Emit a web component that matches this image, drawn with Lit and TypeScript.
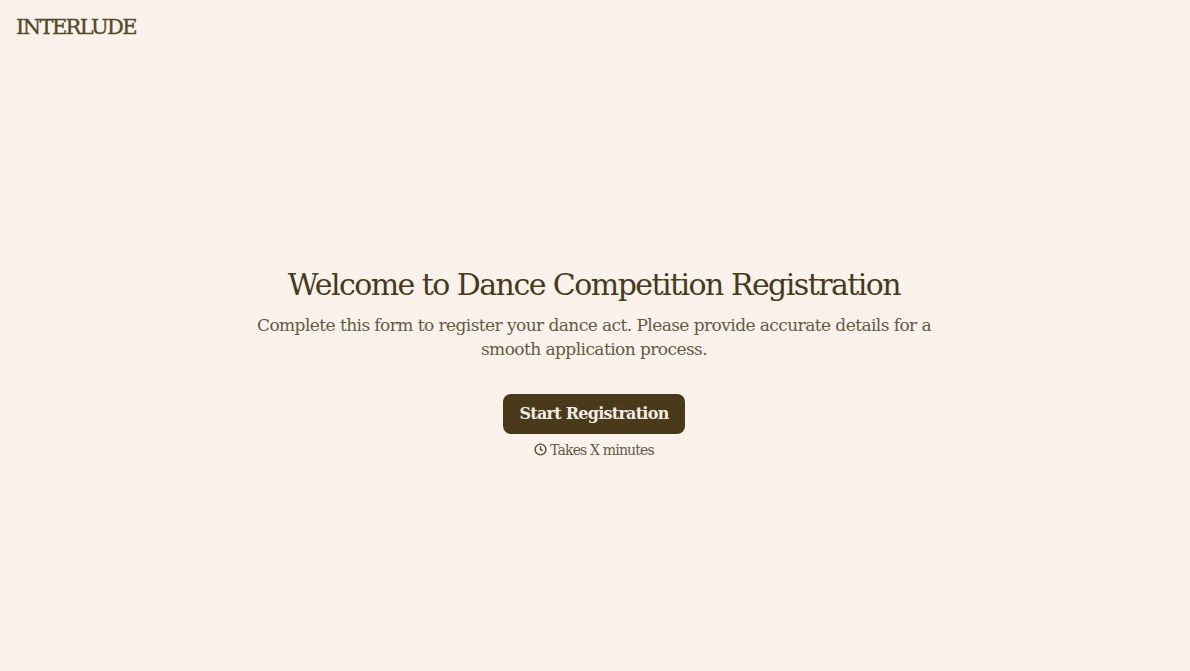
import { LitElement, html, css } from "lit";
import { customElement } from "lit/decorators.js";

@customElement("app-root")
export class AppRoot extends LitElement {
  static styles = css`
    :host { display: flex; flex-direction: column; height: 671px; background: #fbf3eb; color: #483a1a; font-family: "DejaVu Serif", serif; overflow: hidden; }
    .logo { height: 54px; box-sizing: border-box; padding: 13px 16px 0; font-size: 21px; line-height: 28px; letter-spacing: -1.6px; color: #54472a; -webkit-text-stroke: 0.35px #54472a; }
    main { flex: 1; display: flex; flex-direction: column; align-items: center; padding: 210px 2px 0 0; }
    h1 { margin: 0; font-weight: 400; font-size: 30px; line-height: 42px; letter-spacing: -1.55px; }
    p { margin: 7px 0 0; width: 700px; text-align: center; font-size: 17px; line-height: 24px; color: #655a45; letter-spacing: -.57px; }
    button { margin-top: 33px; width: 182px; height: 40px; padding: 0 0 2px; border: 0; border-radius: 8px; background: #483a1a; color: #f3ece2; font: 700 16px "DejaVu Serif", serif; letter-spacing: -.74px; }
    .time { margin-top: 7px; display: flex; align-items: center; gap: 3px; font-size: 14px; line-height: 18px; color: #655a45; letter-spacing: -.83px; }
    svg { width: 13px; height: 13px; margin-top: -2px; color: #5a4f38; }
  `;
  render() {
    return html`<div class="logo">INTERLUDE</div>
      <main>
        <h1>Welcome to Dance Competition Registration</h1>
        <p>Complete this form to register your dance act. Please provide accurate details for a smooth application process.</p>
        <button>Start Registration</button>
        <div class="time"><svg viewBox="0 0 24 24" fill="none" stroke="currentColor" stroke-width="2.6"><circle cx="12" cy="12" r="10"/><path d="M12 6v6l4 2"/></svg>Takes X minutes</div>
      </main>`;
  }
}
